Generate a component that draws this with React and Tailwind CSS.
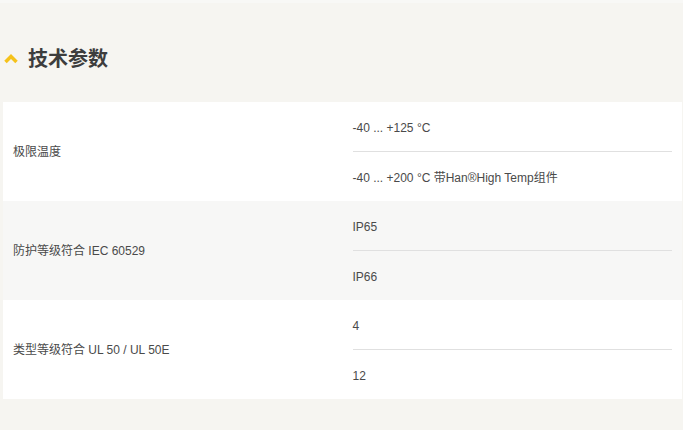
import React from 'react';

const rows = [
    { label: '极限温度', values: ['-40 ... +125 °C', '-40 ... +200 °C 带Han®High Temp组件'], bg: 'bg-white' },
    { label: '防护等级符合 IEC 60529', values: ['IP65', 'IP66'], bg: 'bg-[#f7f7f6]' },
    { label: '类型等级符合 UL 50 / UL 50E', values: ['4', '12'], bg: 'bg-white' },
];

const App = () => {
    return (
        <div className="min-h-screen w-[683px] h-[430px] bg-[#f6f5f1] overflow-hidden" style={{ fontFamily: '"Liberation Sans", "Noto Sans CJK SC", sans-serif' }}>
            <div className="h-[3px] bg-[#f8f8f6]" />
            <div className="flex items-center h-[99px] pt-[12px] pl-[3px]">
                <svg width="16" height="11" viewBox="0 0 16 11" className="mr-[9px]">
                    <path d="M2.5 9 L8 3.5 L13.5 9" fill="none" stroke="#f5c21b" strokeWidth="3.5" strokeLinejoin="miter" />
                </svg>
                <h2 className="text-[20px] font-bold text-[#3d3d3d] leading-none">技术参数</h2>
            </div>

            <div className="ml-[3px] w-[679px]">
                {rows.map((row) => (
                    <div key={row.label} className={`flex h-[99px] ${row.bg}`}>
                        <div className="w-1/2 flex items-center pl-[10px] text-[12px] text-[#4a4a4a]">{row.label}</div>
                        <div className="w-1/2 flex flex-col pl-[10px] pr-[10px]">
                            <div className="h-[50px] flex items-center pt-[2px] text-[12px] text-[#4a4a4a] border-b border-[#e0e0e0]">{row.values[0]}</div>
                            <div className="h-[49px] flex items-center pt-[2px] text-[12px] text-[#4a4a4a]">{row.values[1]}</div>
                        </div>
                    </div>
                ))}
            </div>
        </div>
    );
};

export default App;
